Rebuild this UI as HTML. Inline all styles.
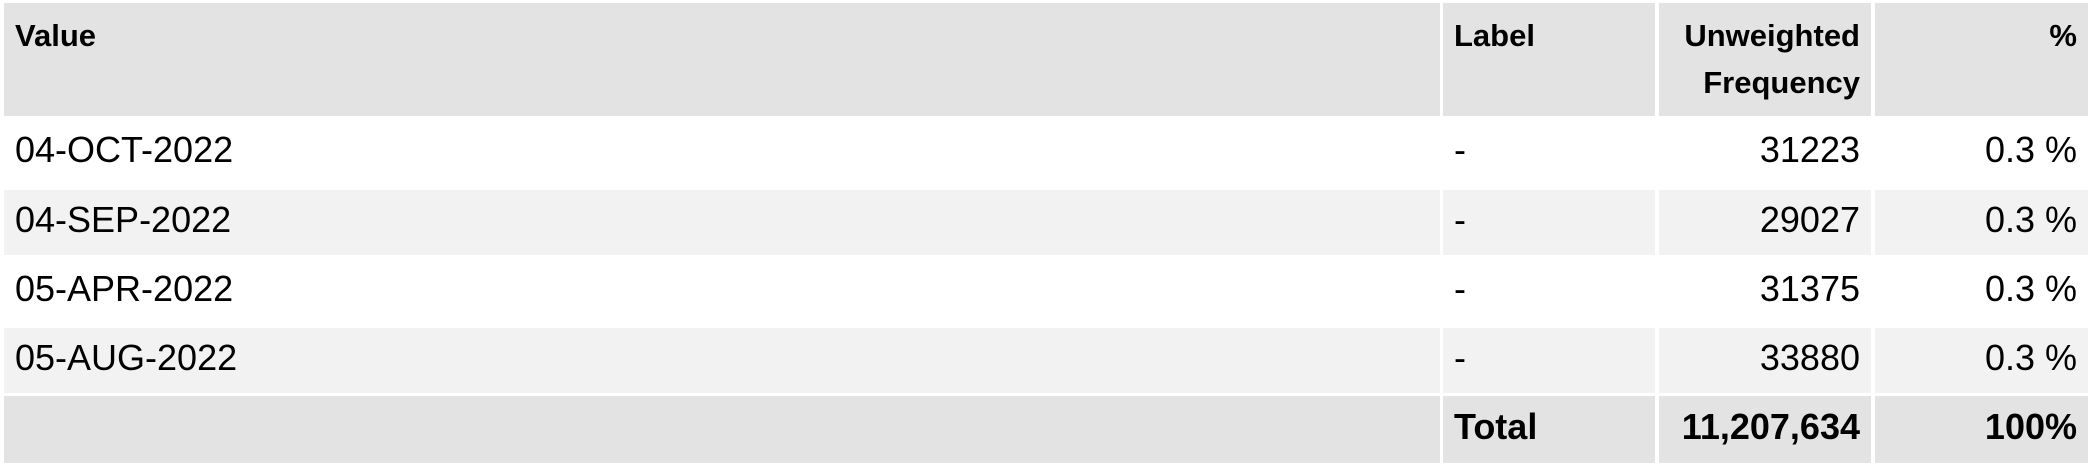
<!DOCTYPE html>
<html><head><meta charset="utf-8"><style>
body{margin:0;width:2092px;height:466px;background:#fff;font-family:"Liberation Sans",Arial,sans-serif;color:#000;position:relative;overflow:hidden}
.c{position:absolute;box-sizing:border-box;padding:0 11px;white-space:nowrap}
.h{background:#e3e3e3;font-weight:bold;font-size:31px;line-height:47px;padding-top:9px}
.r{font-size:36px}
.g{background:#f2f2f2}
.t{background:#e3e3e3;font-weight:bold;font-size:36px}
.R{text-align:right}
.c span{position:relative;top:-3px}
</style></head><body>
<div class="c h" style="left:4px;top:3px;width:1436px;height:113px">Value</div>
<div class="c h" style="left:1443px;top:3px;width:212px;height:113px">Label</div>
<div class="c h R" style="left:1659px;top:3px;width:212px;height:113px">Unweighted<br>Frequency</div>
<div class="c h R" style="left:1875px;top:3px;width:213px;height:113px">%</div>

<div class="c r" style="left:4px;top:118px;width:1436px;height:70px;line-height:70px"><span>04-OCT-2022</span></div>
<div class="c r" style="left:1443px;top:118px;width:212px;height:70px;line-height:70px"><span>-</span></div>
<div class="c r R" style="left:1659px;top:118px;width:212px;height:70px;line-height:70px"><span>31223</span></div>
<div class="c r R" style="left:1875px;top:118px;width:213px;height:70px;line-height:70px"><span>0.3 %</span></div>

<div class="c r g" style="left:4px;top:190px;width:1436px;height:65px;line-height:65px"><span>04-SEP-2022</span></div>
<div class="c r g" style="left:1443px;top:190px;width:212px;height:65px;line-height:65px"><span>-</span></div>
<div class="c r g R" style="left:1659px;top:190px;width:212px;height:65px;line-height:65px"><span>29027</span></div>
<div class="c r g R" style="left:1875px;top:190px;width:213px;height:65px;line-height:65px"><span>0.3 %</span></div>

<div class="c r" style="left:4px;top:257px;width:1436px;height:69px;line-height:69px"><span>05-APR-2022</span></div>
<div class="c r" style="left:1443px;top:257px;width:212px;height:69px;line-height:69px"><span>-</span></div>
<div class="c r R" style="left:1659px;top:257px;width:212px;height:69px;line-height:69px"><span>31375</span></div>
<div class="c r R" style="left:1875px;top:257px;width:213px;height:69px;line-height:69px"><span>0.3 %</span></div>

<div class="c r g" style="left:4px;top:328px;width:1436px;height:65px;line-height:65px"><span>05-AUG-2022</span></div>
<div class="c r g" style="left:1443px;top:328px;width:212px;height:65px;line-height:65px"><span>-</span></div>
<div class="c r g R" style="left:1659px;top:328px;width:212px;height:65px;line-height:65px"><span>33880</span></div>
<div class="c r g R" style="left:1875px;top:328px;width:213px;height:65px;line-height:65px"><span>0.3 %</span></div>

<div class="c t" style="left:4px;top:396px;width:1436px;height:67px;line-height:67px"></div>
<div class="c t" style="left:1443px;top:396px;width:212px;height:67px;line-height:67px"><span>Total</span></div>
<div class="c t R" style="left:1659px;top:396px;width:212px;height:67px;line-height:67px"><span>11,207,634</span></div>
<div class="c t R" style="left:1875px;top:396px;width:213px;height:67px;line-height:67px"><span>100%</span></div>
</body></html>
